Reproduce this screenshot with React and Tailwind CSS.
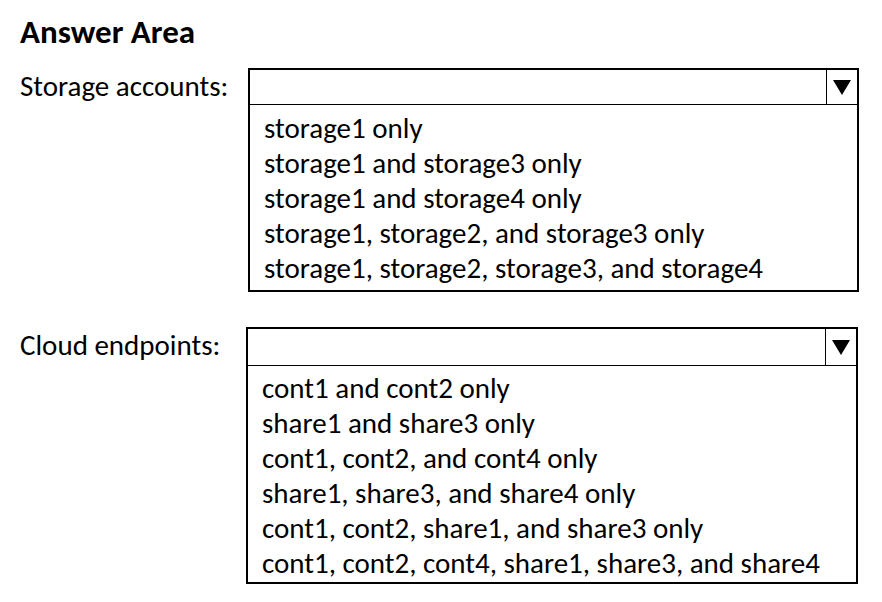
import React from 'react';

const font = { fontFamily: 'Calibri, Carlito, Lato, "Noto Sans", sans-serif' };

const Dropdown = ({ options, headerH, listPad }) => (
  <div className="flex flex-col border-2 border-black bg-white">
    <div className={`flex border-b border-black ${headerH}`}>
      <div className="flex-1" />
      <div className="w-[31px] border-l border-black flex items-center justify-center">
        <svg width="18" height="16" viewBox="0 0 18 16">
          <polygon points="0,1 18,1 9,16" fill="black" />
        </svg>
      </div>
    </div>
    <div className={`flex flex-col px-[14px] ${listPad}`}>
      {options.map((o) => (
        <span key={o} className="text-[29px] leading-[35px] text-black whitespace-nowrap">{o}</span>
      ))}
    </div>
  </div>
);

const App = () => {
  return (
    <div className="w-[882px] h-[602px] bg-white text-black pl-[20px] pt-[14px]" style={font}>
      <h1 className="text-[33px] font-bold leading-[36px]">Answer Area</h1>

      <div className="flex mt-[18px]">
        <div className="w-[228px] h-[37px] flex items-center text-[29px]">Storage accounts:</div>
        <div className="w-[611px]">
          <Dropdown
            headerH="h-[35px]"
            listPad="pt-[6px] pb-[4px]"
            options={[
              'storage1 only',
              'storage1 and storage3 only',
              'storage1 and storage4 only',
              'storage1, storage2, and storage3 only',
              'storage1, storage2, storage3, and storage4',
            ]}
          />
        </div>
      </div>

      <div className="flex mt-[35px]">
        <div className="w-[226px] h-[37px] flex items-center text-[29px]">Cloud endpoints:</div>
        <div className="w-[612px]">
          <Dropdown
            headerH="h-[37px]"
            listPad="pt-[5px] pb-[1px]"
            options={[
              'cont1 and cont2 only',
              'share1 and share3 only',
              'cont1, cont2, and cont4 only',
              'share1, share3, and share4 only',
              'cont1, cont2, share1, and share3 only',
              'cont1, cont2, cont4, share1, share3, and share4',
            ]}
          />
        </div>
      </div>
    </div>
  );
};

export default App;
